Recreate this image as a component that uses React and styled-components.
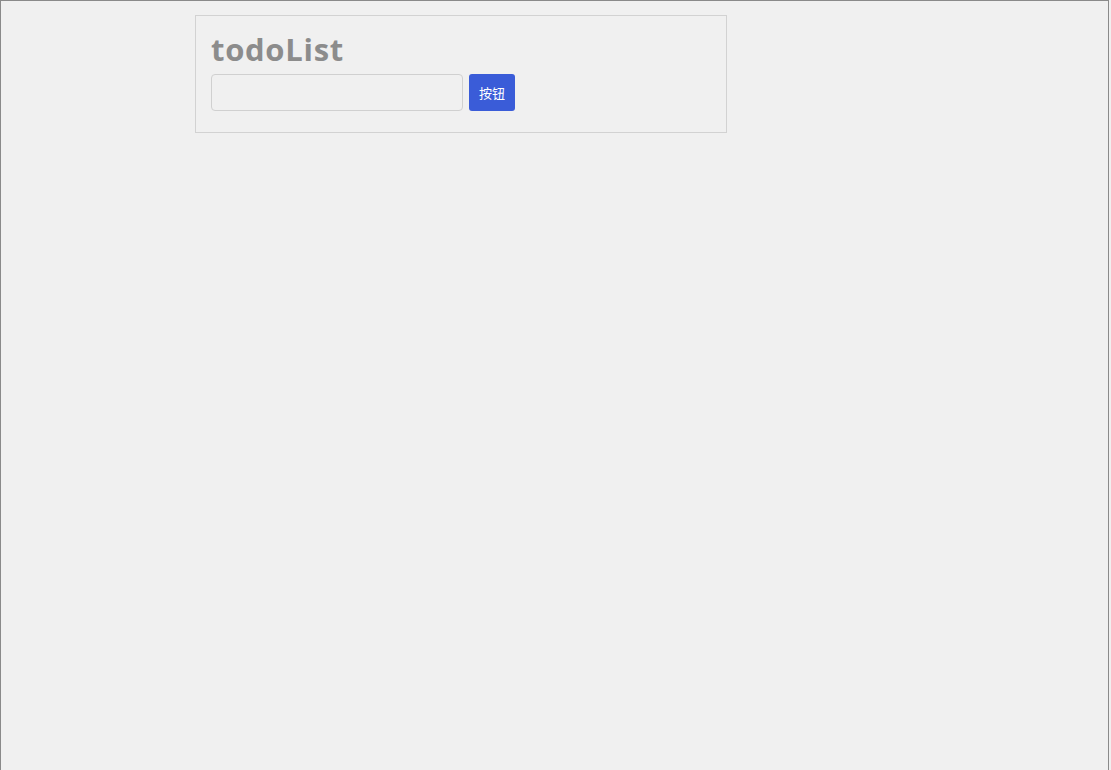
import React, { useState } from "react";
import styled, { createGlobalStyle } from "styled-components";

const Global = createGlobalStyle`
  html, body { margin: 0; padding: 0; background: #f0f0f0; }
  body { font-family: "Open Sans", "Noto Sans CJK SC", sans-serif; }
`;

const Frame = styled.div`
  box-sizing: border-box;
  width: 1109px;
  height: 770px;
  border-top: 1px solid #8a8a8a;
  border-left: 1px solid #8a8a8a;
  border-right: 1px solid #8a8a8a;
  background: #f0f0f0;
  padding: 14px 0 0 194px;
`;

const Card = styled.div`
  box-sizing: border-box;
  width: 532px;
  border: 1px solid #d2d2d2;
  padding: 12px 16px 21px 15px;
`;

const Title = styled.h1`
  margin: 0 0 4px 0;
  font-family: "Open Sans", sans-serif;
  font-weight: 700;
  font-size: 31px;
  line-height: 42px;
  color: #8c8c8c;
  letter-spacing: 0.7px;
`;

const Row = styled.div`
  display: flex;
  align-items: center;
  gap: 6px;
`;

const Input = styled.input`
  box-sizing: border-box;
  width: 252px;
  height: 37px;
  border: 1px solid #d0d0d0;
  border-radius: 4px;
  background: #f0f0f0;
  padding: 0 8px;
  font-size: 14px;
  outline: none;
`;

const Button = styled.button`
  box-sizing: border-box;
  width: 46px;
  height: 37px;
  border: none;
  border-radius: 3px;
  background: #3a5cd8;
  color: #ffffff;
  font-family: "Noto Sans CJK SC", sans-serif;
  font-size: 13px;
  line-height: 37px;
  padding: 0 0 2px 0;
  cursor: pointer;
`;

export default function App() {
  const [value, setValue] = useState("");
  return (
    <>
      <Global />
      <Frame>
        <Card>
          <Title>todoList</Title>
          <Row>
            <Input value={value} onChange={(e) => setValue(e.target.value)} />
            <Button>按钮</Button>
          </Row>
        </Card>
      </Frame>
    </>
  );
}
